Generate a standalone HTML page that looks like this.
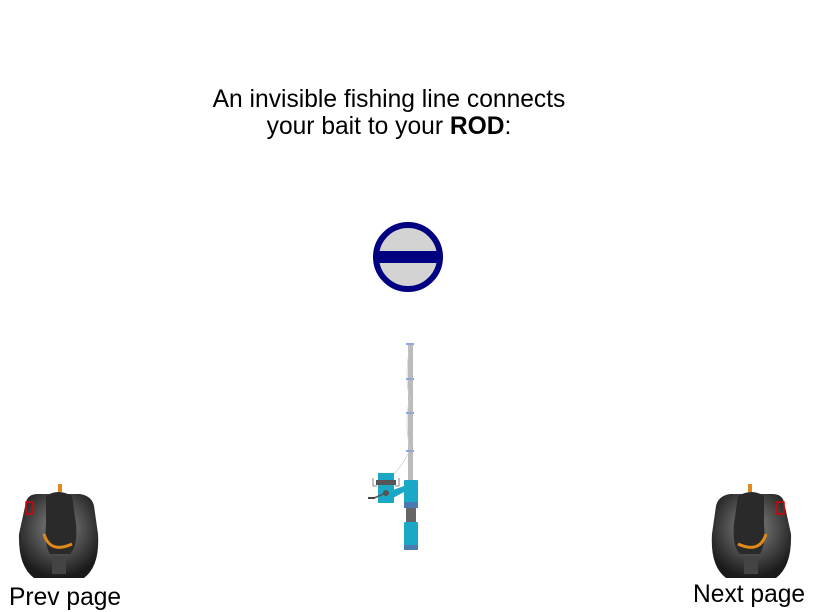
<!DOCTYPE html>
<html><head><style>
body{margin:0;width:817px;height:612px;background:#fff;position:relative;overflow:hidden;font-family:"Liberation Sans",sans-serif;color:#000}
.t{position:absolute;left:139px;width:500px;text-align:center;font-size:24.6px;line-height:27px;top:86px}
.lbl{position:absolute;font-size:24.6px}
</style></head><body>
<div class="t">An invisible fishing line connects<br>your bait to your <b>ROD</b>:</div>
<svg style="position:absolute;left:372px;top:221px" width="72" height="72"><circle cx="36" cy="36" r="32" fill="#d3d3d3" stroke="#000080" stroke-width="6"/><rect x="3" y="30" width="66" height="12" fill="#000080"/></svg>
<svg style="position:absolute;left:360px;top:330px" width="80" height="230">
<rect x="48" y="13" width="5" height="140" fill="#bbb"/>
<path d="M50 14 Q44 50 50 68 Q44 90 50 120 Q40 140 30 147" stroke="#ccc" fill="none" stroke-width="0.7"/>
<g fill="#8fa8d8"><rect x="46" y="13" width="8" height="2"/><rect x="46" y="48" width="8" height="2"/><rect x="46" y="82" width="8" height="2"/><rect x="46" y="120" width="8" height="2"/></g>
<rect x="44" y="150" width="14" height="26" rx="1" fill="#1ba8c7"/><rect x="44" y="172" width="14" height="6" fill="#4b7ab0"/>
<rect x="46" y="178" width="10" height="16" fill="#666"/>
<rect x="44" y="192" width="14" height="28" rx="1" fill="#1ba8c7"/><rect x="44" y="215" width="14" height="5" fill="#4b7ab0"/>
<rect x="18" y="143" width="16" height="30" fill="#1ba8c7"/><rect x="16" y="150" width="20" height="5" fill="#555"/>
<path d="M33 160 L44 156 L44 162 L33 168Z" fill="#1ba8c7"/>
<circle cx="26" cy="163" r="3" fill="#555"/><line x1="26" y1="163" x2="14" y2="168" stroke="#555" stroke-width="1.5"/><rect x="8" y="167" width="7" height="2" fill="#444"/>
<path d="M13 148 V156 H17 M39 148 V156 H35" stroke="#666" fill="none" stroke-width="0.8"/>
</svg>
<svg style="position:absolute;left:16px;top:484px" width="84" height="98" viewBox="0 0 84 98">
<defs><radialGradient id="g" cx="50%" cy="40%" r="60%"><stop offset="0" stop-color="#888"/><stop offset="1" stop-color="#1a1a1a"/></radialGradient></defs>
<g id="js"><rect x="42" y="0" width="4" height="8" fill="#e08a1a"/>
<path d="M10 18 Q12 10 22 10 L64 10 Q76 12 78 22 L82 50 Q84 82 68 94 L18 94 Q2 82 3 50 Z" fill="url(#g)"/>
<path d="M30 12 Q42 4 56 12 L60 40 Q62 62 54 70 L34 70 Q28 60 30 40Z" fill="#2a2a2a"/>
<path d="M28 50 Q34 70 56 60" stroke="#e08a1a" stroke-width="3" fill="none"/>
<rect x="10" y="18" width="7" height="12" fill="none" stroke="#d00" stroke-width="1.5"/>
<rect x="36" y="72" width="14" height="18" fill="#444"/></g>
</svg>
<svg style="position:absolute;left:710px;top:484px;transform:scaleX(-1)" width="84" height="98" viewBox="0 0 84 98"><use href="#js"/></svg>
<div class="lbl" style="left:9px;top:584px">Prev page</div>
<div class="lbl" style="left:693px;top:581px">Next page</div>
</body></html>
